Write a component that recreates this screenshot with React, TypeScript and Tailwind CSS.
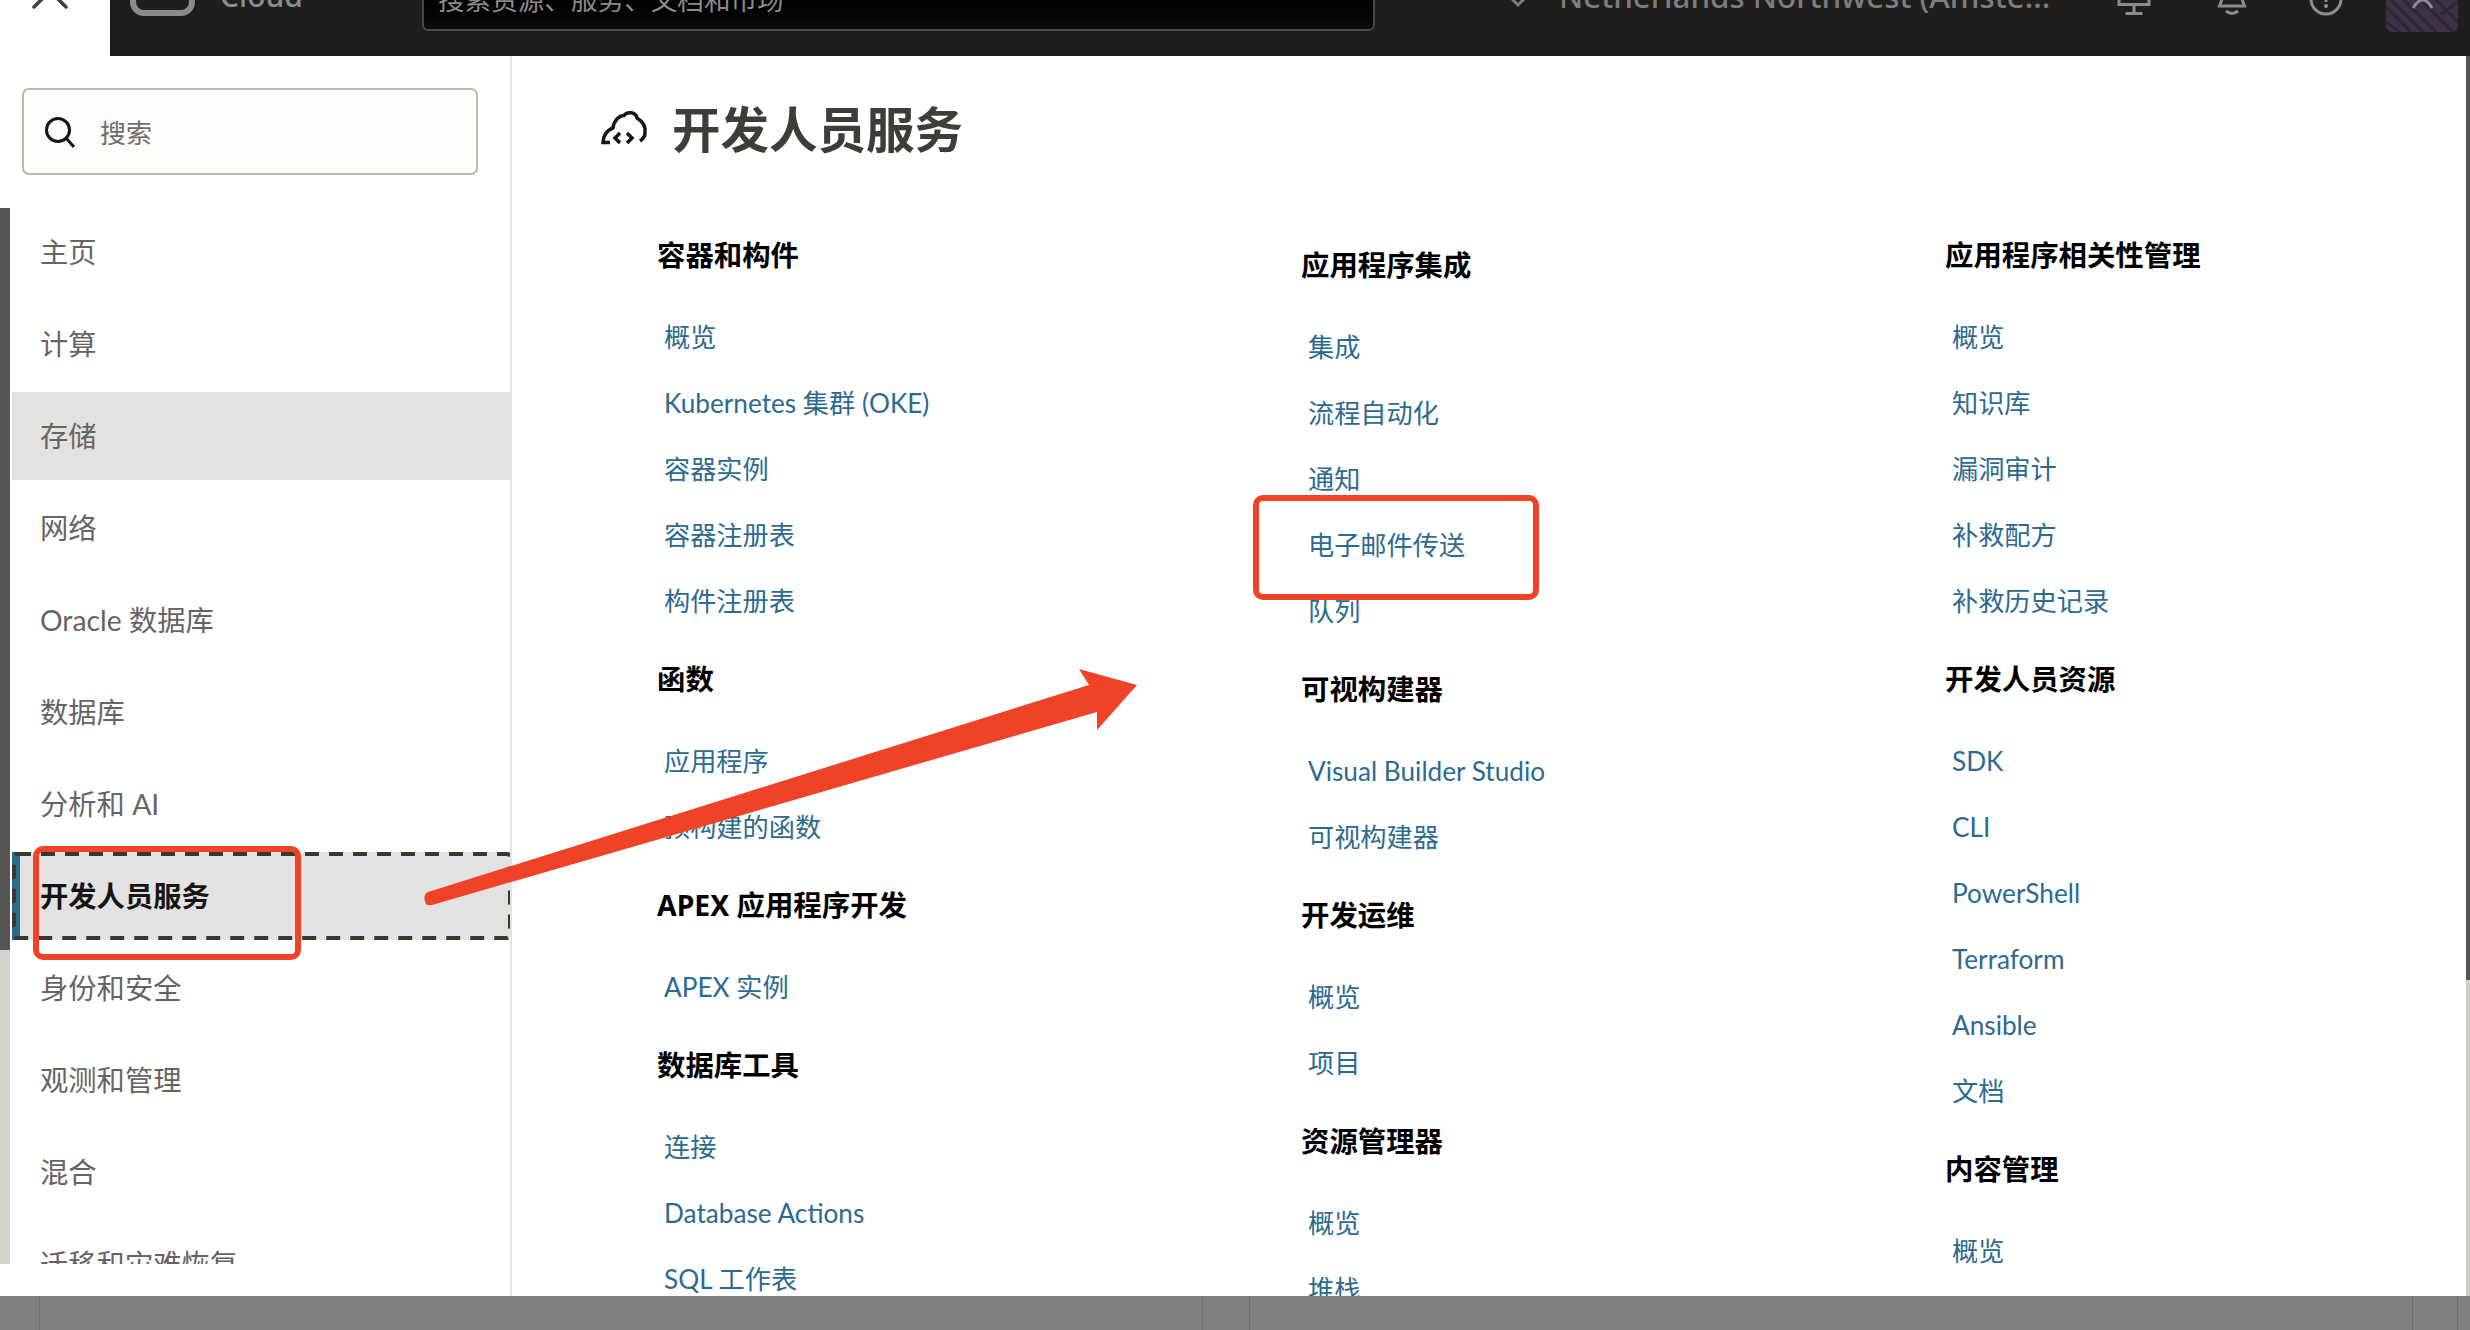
import React from "react";

const font = { fontFamily: '"Noto Sans", "Noto Sans CJK SC", sans-serif' };
const lato = { fontFamily: 'Lato, "Noto Sans CJK SC", sans-serif' };

type Section = { title: string; links: string[] };

const col1: Section[] = [
  { title: "容器和构件", links: ["概览", "Kubernetes 集群 (OKE)", "容器实例", "容器注册表", "构件注册表"] },
  { title: "函数", links: ["应用程序", "预构建的函数"] },
  { title: "APEX 应用程序开发", links: ["APEX 实例"] },
  { title: "数据库工具", links: ["连接", "Database Actions", "SQL 工作表"] },
];
const col2: Section[] = [
  { title: "应用程序集成", links: ["集成", "流程自动化", "通知", "电子邮件传送", "队列"] },
  { title: "可视构建器", links: ["Visual Builder Studio", "可视构建器"] },
  { title: "开发运维", links: ["概览", "项目"] },
  { title: "资源管理器", links: ["概览", "堆栈"] },
];
const col3: Section[] = [
  { title: "应用程序相关性管理", links: ["概览", "知识库", "漏洞审计", "补救配方", "补救历史记录"] },
  { title: "开发人员资源", links: ["SDK", "CLI", "PowerShell", "Terraform", "Ansible", "文档"] },
  { title: "内容管理", links: ["概览"] },
];

const menu = ["主页", "计算", "存储", "网络", "Oracle 数据库", "数据库", "分析和 AI", "开发人员服务", "身份和安全", "观测和管理", "混合", "迁移和灾难恢复"];

function Column({ sections, className }: { sections: Section[]; className: string }) {
  return (
    <div className={className}>
      {sections.map((s) => (
        <div key={s.title} className="mb-[25px]">
          <h3 className="h-[40px] leading-[40px] text-[28.4px] font-bold text-black mb-[29px] whitespace-nowrap">{s.title}</h3>
          {s.links.map((l) => (
            <div key={l} style={lato} className="h-[66px] flex items-center pl-[7px] pt-[2px] text-[26.2px] text-[#2c6a8f] whitespace-nowrap">{l}</div>
          ))}
        </div>
      ))}
    </div>
  );
}

export default function App() {
  return (
    <div className="relative w-[2470px] h-[1330px] overflow-hidden bg-white flex flex-col" style={font}>
      {/* top bar */}
      <header className="h-[56px] shrink-0 flex overflow-hidden">
        <div className="w-[110px] shrink-0 bg-white relative">
          <svg className="absolute left-[30px] top-0" width="40" height="10" viewBox="0 0 40 10" fill="none" stroke="#3f3d3a" strokeWidth="3.5" strokeLinecap="round">
            <path d="M4 7 L16 -5 M36 7 L24 -5" />
          </svg>
        </div>
        <div className="flex-1 bg-[#1e1d1b] flex items-start relative text-[#8c8c8c]">
          <div className="ml-[20px] mt-[-24px] w-[65px] h-[40px] rounded-[14px] border-[6px] border-[#8a8a8a] shrink-0" />
          <div className="ml-[25px] mt-[-24px] w-[90px] text-[30px] leading-[40px] font-medium text-[#8c8c8c] shrink-0">Cloud</div>
          <div className="ml-[112px] mt-[-30px] w-[953px] h-[61px] rounded-[6px] border-2 border-[#4a4a4a] bg-gradient-to-b from-[#000000] to-[#0c0c0b] pl-[14px] pt-[11px] text-[26.6px] leading-[34px] text-[#8c8c8c] shrink-0">
            搜索资源、服务、文档和市场
          </div>
          <svg className="ml-[136px] shrink-0" width="14" height="8" viewBox="0 0 14 8" fill="none" stroke="#7d7d7d" strokeWidth="3">
            <path d="M1 -1 L7 5 L13 -1" />
          </svg>
          <div className="ml-[34px] mt-[-24px] text-[31.3px] leading-[40px] font-medium whitespace-nowrap text-[#7d7d7d] shrink-0">Netherlands Northwest (Amste...</div>
          <svg className="absolute left-[2007px] top-0" width="34" height="16" viewBox="0 0 34 16" fill="none" stroke="#8c8c8c" strokeWidth="3">
            <path d="M2 -6 V4.5 H32 V-6 M17 4.5 V13 M8.5 13.5 H25.5" />
          </svg>
          <svg className="absolute left-[2107px] top-0" width="30" height="16" viewBox="0 0 30 16" fill="none" stroke="#8c8c8c" strokeWidth="3">
            <path d="M7 -6 L2.5 6 H27.5 L23 -6 M9 11 Q15 16 21 11" />
          </svg>
          <svg className="absolute left-[2199px] top-0" width="34" height="16" viewBox="0 0 34 16" fill="none" stroke="#8c8c8c" strokeWidth="3">
            <circle cx="17" cy="-1" r="15" />
            <path d="M17 -6 V2" />
            <circle cx="17" cy="6" r="2" fill="#8c8c8c" stroke="none" />
          </svg>
          <div className="absolute left-[2276px] top-[-20px] w-[72px] h-[52px] rounded-[6px] bg-[#3c3145] overflow-hidden">
            <svg width="72" height="52" viewBox="0 0 72 52" fill="none" stroke="#2c2634" strokeWidth="3">
              <path d="M-5 22 L25 52 M5 20 L37 52 M18 20 L50 52 M35 20 L67 52 M50 20 L80 50 M0 42 L14 52 M55 34 L72 22" />
              <path d="M27 28 Q37 12 46 28" stroke="#8c8c8c" strokeWidth="3" />
            </svg>
          </div>
        </div>
      </header>

      {/* body */}
      <div className="flex-1 flex min-h-0 relative">
        <aside className="w-[512px] shrink-0 border-r-2 border-[#e4e4e4] flex flex-col">
          <div className="h-[152px] shrink-0 pt-[32px] pl-[22px]">
            <div className="w-[456px] h-[87px] rounded-[7px] border-2 border-[#bcb6ae] bg-[#fdfdfb] flex items-center pl-[20px] gap-[24px]">
              <svg width="32" height="32" viewBox="0 0 32 32" fill="none" stroke="#161513" strokeWidth="3">
                <circle cx="14" cy="14" r="11.5" />
                <path d="M22 22 L30 31" />
              </svg>
              <span className="text-[26px] text-[#6f6c69] pt-[3px]">搜索</span>
            </div>
          </div>
          <div className="h-[1056px] shrink-0 overflow-hidden flex">
            <div className="w-[10px] shrink-0 bg-[#d4d2cc]">
              <div className="h-[742px] bg-[#555555]" />
            </div>
            <div className="flex-1 min-w-0 pl-[2px]">
              {menu.map((m) => {
                const hl = m === "存储";
                const active = m === "开发人员服务";
                return (
                  <div key={m} style={lato} className="h-[92px]">
                    <div
                      className={
                        "h-[88px] flex items-center text-[28.3px] whitespace-nowrap relative " +
                        (active ? "text-[#161513] font-bold " : "text-[#666462] ") +
                        (hl || active ? "bg-[#e3e3e1]" : "")
                      }
                    >
                      {active && <div className="absolute left-0 top-0 h-[88px] w-[8px] bg-[#2c6a8f]" />}
                      {active && (
                        <svg className="absolute left-0 top-0" width="500" height="88" fill="none">
                          <rect x="2" y="2" width="496" height="84" rx="3" stroke="#3a3733" strokeWidth="4" strokeDasharray="14 10" />
                        </svg>
                      )}
                      <span className="relative pl-[28px]">{m}</span>
                    </div>
                  </div>
                );
              })}
            </div>
          </div>
        </aside>

        <main className="flex-1 min-w-0 overflow-hidden pr-[4px] flex flex-col">
          <div className="h-[179px] shrink-0 flex items-start pl-[78px] pt-[37px]">
            <svg className="mt-[7px] shrink-0" width="70" height="55" viewBox="0 0 70 55" fill="none" stroke="#161513" strokeWidth="3.5">
              <path d="M20 42.5 H13 C13 36 17 30 23 28 C24 20 30 15 34 15.5 C37 11 46 12 47 18 C52 21 56 26 55 33 C55 36 53 39 50 41" />
              <path d="M30 33 L25 38 L30 43 M37 33 L42 38 L37 43" />
            </svg>
            <h1 className="ml-[12px] text-[48.5px] leading-[72px] font-bold text-[#3f3d3a] whitespace-nowrap">开发人员服务</h1>
          </div>
          <div className="flex-1 flex items-start pl-[145px] min-h-0">
            <Column sections={col1} className="w-[644px] shrink-0" />
            <Column sections={col2} className="w-[644px] shrink-0 pt-[10px]" />
            <Column sections={col3} className="flex-1" />
          </div>
        </main>
        <div className="absolute right-0 top-0 bottom-0 w-[4px] bg-[#cfcdc8]">
          <div className="h-[924px] bg-[#555555]" />
        </div>
      </div>

      {/* dimmed strip */}
      <footer className="h-[34px] shrink-0 bg-[#808080] relative">
        <div className="absolute left-[39px] top-0 bottom-0 w-px bg-[#6e6e6e]" />
        <div className="absolute left-[1202px] top-0 bottom-0 w-px bg-[#6e6e6e]" />
        <div className="absolute left-[1249px] top-0 bottom-0 w-px bg-[#6e6e6e]" />
        <div className="absolute left-[2412px] top-0 bottom-0 w-px bg-[#6e6e6e]" />
        <div className="absolute left-[2457px] top-0 bottom-0 w-px bg-[#6e6e6e]" />
      </footer>

      {/* annotations */}
      <div className="absolute left-[33px] top-[846px] w-[268px] h-[114px] rounded-[10px] border-[6px] border-[#ee4326]" />
      <div className="absolute left-[1253px] top-[495px] w-[286px] h-[105px] rounded-[10px] border-[6px] border-[#ee4326]" />
      <svg className="absolute left-0 top-0 pointer-events-none" width="2470" height="1330">
        <path d="M1137 685 L1079 669 L1089 685 L428 892 Q422 895 426 904 Q428 906 432 905 L1097 712 L1097 730 Z" fill="#ee4326" />
      </svg>
    </div>
  );
}
